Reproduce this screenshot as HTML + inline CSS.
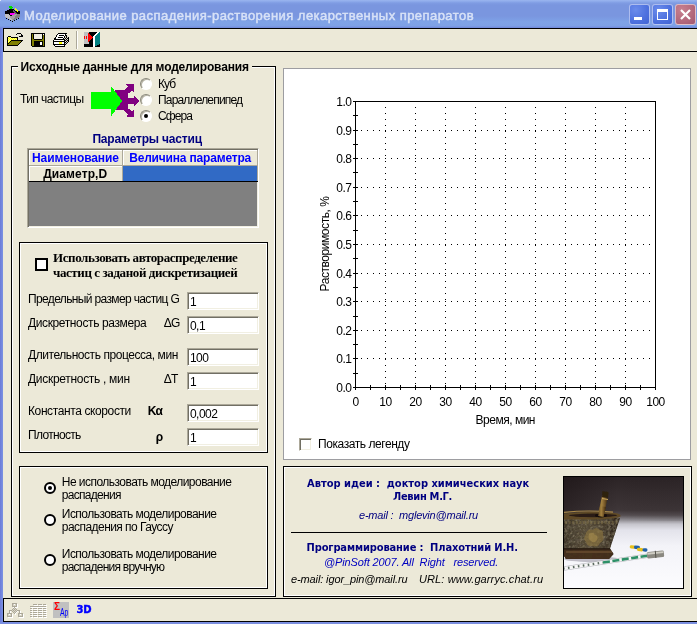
<!DOCTYPE html>
<html><head><meta charset="utf-8">
<title>Моделирование распадения-растворения лекарственных препаратов</title>
<style>
html,body{margin:0;padding:0;}
body{width:697px;height:624px;overflow:hidden;background:#ECE9D8;position:relative;font-family:"Liberation Sans",sans-serif;font-size:11px;color:#000;}
.a{position:absolute;}
.t{position:absolute;white-space:pre;line-height:13px;}
.b{font-weight:bold;font-family:"DejaVu Sans Condensed","Liberation Sans",sans-serif;}
.i{font-style:italic;}
.u{position:absolute;white-space:pre;font-size:12px;line-height:14px;}
.bb{font-weight:bold;}
.box{position:absolute;border:1px solid #000;box-sizing:border-box;box-shadow:inset 0 0 0 1px #fff;}
.inp{position:absolute;box-sizing:border-box;background:#fff;border:1px solid;border-color:#aca899 #fff #fff #aca899;box-shadow:inset 1px 1px 0 #716f64, inset -1px -1px 0 #f1efe2;width:72px;height:18px;left:187px;padding:2px 0 0 2px;line-height:14px;font-size:12px;letter-spacing:-0.55px;}
.sr{position:absolute;width:12px;height:12px;border-radius:50%;box-sizing:border-box;background:#fff;border:1px solid;border-color:#8a887b #fff #fff #8a887b;box-shadow:inset 1px 1px 0 #b5b2a3;transform:rotate(0deg);}
.br{position:absolute;width:12px;height:12px;border-radius:50%;box-sizing:border-box;background:#fff;border:2px solid #000;}
.cb{position:absolute;top:4px;width:21px;height:21px;box-sizing:border-box;border:1px solid rgba(255,255,255,.55);border-radius:3px;background:radial-gradient(circle at 30% 25%,#6b8ceb 0,#4f72df 55%,#4163d3 100%);}
#w{position:absolute;left:0;top:0;width:697px;height:624px;will-change:transform;}
</style></head><body><div id="w">
<!-- title bar -->
<div class="a" style="left:0;top:0;width:697px;height:28px;background:linear-gradient(#9ab5ef 0,#92aeec 1px,#7f9ce3 3px,#7a96df 5px,#7a96df 16px,#7c9ce3 19px,#7fa3e7 22px,#7ea1e6 26px,#7791df 27px,#6f88d8 28px);"></div>
<div class="t" style="left:24px;top:8px;font-weight:normal;-webkit-text-stroke:0.45px #d8e2f7;font-size:13px;line-height:16px;color:#d8e2f7;letter-spacing:0.45px;">Моделирование распадения-растворения лекарственных препаратов</div>
<div class="cb" style="left:629px;"><div class="a" style="left:4px;top:12px;width:8px;height:3px;background:#fff;"></div></div>
<div class="cb" style="left:652px;"><div class="a" style="left:4px;top:4px;width:11px;height:11px;box-sizing:border-box;border:1px solid #fff;border-top-width:3px;"></div></div>
<div class="cb" style="left:675px;background:radial-gradient(circle at 30% 25%,#c8808f 0,#b46a7e 55%,#a25872 100%);"><svg class="a" style="left:0;top:0" width="19" height="19"><path d="M5 5l9 9M14 5l-9 9" stroke="#fff" stroke-width="2.2" fill="none"/></svg></div>
<svg class="a" style="left:5px;top:6px;" width="16" height="16" viewBox="0 0 16 16" shape-rendering="crispEdges">
<path fill="#00e000" d="M4 0h3v1h-3zM4 1h4v1h-4zM5 2h2v1h-2z"/>
<path fill="#ffff00" d="M10 2h1v1h-1zM10 3h2v1h-2zM11 4h2v1h-2zM12 5h1v1h-1z"/>
<path fill="#000" d="M4 3h5v1h-5zM2 4h6v1h-6zM9 4h1v1h-1zM0 5h8v1h-8zM10 5h2v1h-2zM13 5h2v1h-2zM0 6h9v1h-9zM11 6h4v1h-4zM0 7h5v1h-5zM12 7h3v1h-3zM4 8h1v1h-1zM5 9h2v1h-2zM1 12h1v1h-1zM13 12h1v1h-1zM3 13h1v1h-1zM11 13h1v1h-1zM5 14h1v1h-1zM9 14h1v1h-1zM7 15h1v1h-1z"/>
<path fill="#606060" d="M8 4h1v1h-1zM8 5h2v1h-2zM9 6h2v1h-2zM10 7h2v1h-2z"/>
<path fill="#ff00ff" d="M5 7h5v1h-5zM5 8h4v1h-4z"/>
<path fill="#c0c0c0" d="M0 8h4v1h-4zM0 9h5v1h-5zM0 10h5v1h-5zM1 11h4v1h-4zM3 12h3v1h-3zM5 13h2v1h-2z"/>
<path fill="#a0a0a0" d="M9 8h3v1h-3zM7 9h4v1h-4zM5 10h5v1h-5zM5 11h5v1h-5zM6 12h3v1h-3zM7 13h1v1h-1zM7 14h1v1h-1z"/>
<path fill="#808080" d="M12 8h3v1h-3zM11 9h4v1h-4zM10 10h5v1h-5zM10 11h4v1h-4zM9 12h3v1h-3zM8 13h2v1h-2z"/>
</svg>
<div class="a" style="left:0;top:0;width:1px;height:1px;background:#e4e6f4;"></div>
<!-- window borders -->
<div class="a" style="left:0;top:28px;width:3px;height:596px;background:linear-gradient(90deg,#6b7ad8,#7b92e3);"></div>
<div class="a" style="left:0;top:622px;width:697px;height:2px;background:#7b8fe0;"></div>
<!-- toolbar -->
<div class="a" style="left:3px;top:28px;width:694px;height:1px;background:#000;"></div>
<div class="a" style="left:3px;top:51px;width:694px;height:1px;background:#000;"></div>
<div class="a" style="left:3px;top:28px;width:1px;height:24px;background:#000;"></div>
<svg class="a" style="left:7px;top:33px;" width="16" height="13" viewBox="0 0 16 13" shape-rendering="crispEdges">
<path fill="#000" d="M10 0h4v1h-4zM9 1h1v1h-1zM14 1h1v1h-1zM14 2h2v1h-2zM1 3h3v1h-3zM12 3h4v1h-4zM0 4h1v1h-1zM4 4h7v1h-7zM0 5h1v1h-1zM10 5h1v1h-1zM0 6h1v1h-1zM10 6h1v1h-1zM0 7h1v1h-1zM4 7h12v1h-12zM0 8h1v1h-1zM3 8h1v1h-1zM14 8h1v1h-1zM0 9h1v1h-1zM2 9h1v1h-1zM13 9h1v1h-1zM0 10h2v1h-2zM12 10h1v1h-1zM0 11h1v1h-1zM11 11h1v1h-1zM0 12h11v1h-11z"/>
<path fill="#ffff90" d="M1 4h1v1h-1zM3 4h1v1h-1zM2 5h1v1h-1zM4 5h1v1h-1zM6 5h1v1h-1zM8 5h1v1h-1zM1 6h1v1h-1zM3 6h1v1h-1zM5 6h1v1h-1zM7 6h1v1h-1zM9 6h1v1h-1zM2 7h1v1h-1zM1 8h1v1h-1z"/>
<path fill="#ffff00" d="M2 4h1v1h-1zM1 5h1v1h-1zM3 5h1v1h-1zM5 5h1v1h-1zM7 5h1v1h-1zM9 5h1v1h-1zM2 6h1v1h-1zM4 6h1v1h-1zM6 6h1v1h-1zM8 6h1v1h-1zM1 7h1v1h-1zM3 7h1v1h-1zM2 8h1v1h-1zM1 9h1v1h-1z"/>
<path fill="#808000" d="M4 8h10v1h-10zM3 9h10v1h-10zM2 10h10v1h-10zM1 11h10v1h-10z"/>
</svg>
<svg class="a" style="left:31px;top:33px;" width="14" height="14" viewBox="0 0 14 14" shape-rendering="crispEdges">
<path fill="#000" d="M0 0h14v1h-14zM0 1h1v1h-1zM2 1h1v1h-1zM11 1h1v1h-1zM13 1h1v1h-1zM0 2h1v1h-1zM2 2h1v1h-1zM11 2h1v1h-1zM13 2h1v1h-1zM0 3h1v1h-1zM2 3h1v1h-1zM11 3h1v1h-1zM13 3h1v1h-1zM0 4h1v1h-1zM2 4h1v1h-1zM11 4h1v1h-1zM13 4h1v1h-1zM0 5h1v1h-1zM2 5h1v1h-1zM11 5h1v1h-1zM13 5h1v1h-1zM0 6h1v1h-1zM3 6h8v1h-8zM13 6h1v1h-1zM0 7h1v1h-1zM13 7h1v1h-1zM0 8h1v1h-1zM3 8h9v1h-9zM13 8h1v1h-1zM0 9h1v1h-1zM3 9h6v1h-6zM11 9h1v1h-1zM13 9h1v1h-1zM0 10h1v1h-1zM3 10h6v1h-6zM11 10h1v1h-1zM13 10h1v1h-1zM0 11h1v1h-1zM3 11h6v1h-6zM11 11h1v1h-1zM13 11h1v1h-1zM0 12h1v1h-1zM3 12h9v1h-9zM13 12h1v1h-1zM1 13h13v1h-13z"/>
<path fill="#808000" d="M1 1h1v1h-1zM1 2h1v1h-1zM12 2h1v1h-1zM1 3h1v1h-1zM12 3h1v1h-1zM1 4h1v1h-1zM12 4h1v1h-1zM1 5h1v1h-1zM12 5h1v1h-1zM1 6h2v1h-2zM11 6h2v1h-2zM1 7h12v1h-12zM1 8h2v1h-2zM12 8h1v1h-1zM1 9h2v1h-2zM12 9h1v1h-1zM1 10h2v1h-2zM12 10h1v1h-1zM1 11h2v1h-2zM12 11h1v1h-1zM1 12h2v1h-2zM12 12h1v1h-1z"/>
<path fill="#f1efe2" d="M3 1h8v1h-8zM3 2h8v1h-8zM3 3h8v1h-8zM3 4h8v1h-8zM3 5h8v1h-8z"/>
<path fill="#fff" d="M12 1h1v1h-1zM9 9h2v1h-2zM9 10h2v1h-2zM9 11h2v1h-2z"/>
</svg>
<svg class="a" style="left:53px;top:33px;" width="16" height="14" viewBox="0 0 16 14" shape-rendering="crispEdges">
<path fill="#000" d="M5 0h9v1h-9zM4 1h1v1h-1zM12 1h1v1h-1zM3 2h1v1h-1zM6 2h5v1h-5zM12 2h2v1h-2zM3 3h1v1h-1zM11 3h1v1h-1zM13 3h1v1h-1zM2 4h1v1h-1zM5 4h5v1h-5zM11 4h1v1h-1zM13 4h1v1h-1zM15 4h1v1h-1zM1 5h2v1h-2zM10 5h1v1h-1zM12 5h1v1h-1zM14 5h2v1h-2zM1 6h11v1h-11zM13 6h1v1h-1zM15 6h1v1h-1zM0 7h1v1h-1zM11 7h2v1h-2zM14 7h2v1h-2zM0 8h12v1h-12zM13 8h1v1h-1zM15 8h1v1h-1zM0 9h1v1h-1zM11 9h2v1h-2zM14 9h1v1h-1zM0 10h1v1h-1zM11 10h1v1h-1zM13 10h1v1h-1zM0 11h13v1h-13zM1 12h1v1h-1zM11 12h1v1h-1zM2 13h10v1h-10z"/>
<path fill="#fff" d="M5 1h7v1h-7zM4 2h2v1h-2zM11 2h1v1h-1zM4 3h7v1h-7zM3 4h2v1h-2zM10 4h1v1h-1zM3 5h7v1h-7zM1 7h10v1h-10zM1 9h5v1h-5zM9 9h2v1h-2zM1 10h5v1h-5zM9 10h2v1h-2zM2 12h9v1h-9z"/>
<path fill="#d8d5c6" d="M12 3h1v1h-1zM14 3h1v1h-1zM12 4h1v1h-1zM14 4h1v1h-1zM11 5h1v1h-1zM13 5h1v1h-1zM12 6h1v1h-1zM14 6h1v1h-1zM13 7h1v1h-1zM12 8h1v1h-1zM14 8h1v1h-1zM13 9h1v1h-1zM12 10h1v1h-1z"/>
<path fill="#ffff00" d="M6 9h3v1h-3zM6 10h3v1h-3z"/>
</svg>
<div class="a" style="left:76px;top:31px;width:1px;height:18px;background:#aca899;"></div>
<div class="a" style="left:77px;top:31px;width:1px;height:18px;background:#fff;"></div>
<svg class="a" style="left:84px;top:32px;" width="16" height="15" viewBox="0 0 16 15" shape-rendering="crispEdges">
<rect x="0" y="0" width="16" height="15" fill="#000"/>
<rect x="0" y="0" width="5" height="12" fill="#c0c0c0"/>
<rect x="0" y="4" width="1" height="3" fill="#f00"/><rect x="2" y="4" width="1" height="3" fill="#f00"/>
<polygon points="4,1 9.5,5.5 4,10" fill="#f00"/>
<rect x="5" y="0" width="11" height="0" fill="#000"/>
<polygon points="10,4.5 14.5,0 16,0 16,12 11.5,14.5 10,14.5" fill="#008080"/>
<path d="M14.5 0.2L10 4.7V14.5" stroke="#fff" stroke-width="1.2" fill="none"/>
</svg>
<!-- status bar -->
<div class="a" style="left:3px;top:598px;width:694px;height:1px;background:#000;"></div>
<div class="a" style="left:3px;top:621px;width:694px;height:1px;background:#000;"></div>
<div class="a" style="left:3px;top:598px;width:1px;height:24px;background:#000;"></div>
<svg class="a" style="left:7px;top:603px;" width="17" height="15" viewBox="0 0 17 15" shape-rendering="crispEdges">
<path fill="#aca899" d="M5 0h5v1h-5zM5 1h1v1h-1zM9 1h1v1h-1zM5 2h1v1h-1zM9 2h1v1h-1zM5 3h5v1h-5zM7 4h1v1h-1zM6 5h1v1h-1zM8 5h1v1h-1zM5 6h1v1h-1zM7 6h1v1h-1zM9 6h1v1h-1zM2 7h3v1h-3zM6 7h1v1h-1zM8 7h1v1h-1zM10 7h3v1h-3zM2 8h1v1h-1zM5 8h1v1h-1zM7 8h1v1h-1zM9 8h1v1h-1zM12 8h1v1h-1zM2 9h1v1h-1zM6 9h1v1h-1zM8 9h1v1h-1zM12 9h1v1h-1zM0 10h5v1h-5zM7 10h1v1h-1zM11 10h5v1h-5zM0 11h1v1h-1zM4 11h1v1h-1zM11 11h1v1h-1zM15 11h1v1h-1zM0 12h1v1h-1zM4 12h1v1h-1zM11 12h1v1h-1zM15 12h1v1h-1zM0 13h5v1h-5zM11 13h5v1h-5z"/>
<path fill="#d8d5c6" d="M6 1h1v1h-1zM8 1h1v1h-1zM6 2h3v1h-3zM7 5h1v1h-1zM6 6h1v1h-1zM8 6h1v1h-1zM5 7h1v1h-1zM7 7h1v1h-1zM9 7h1v1h-1zM6 8h1v1h-1zM8 8h1v1h-1zM7 9h1v1h-1zM1 11h1v1h-1zM3 11h1v1h-1zM12 11h1v1h-1zM14 11h1v1h-1zM1 12h3v1h-3zM12 12h3v1h-3z"/>
<path fill="#fff" d="M7 1h1v1h-1zM10 1h1v1h-1zM10 2h1v1h-1zM10 3h1v1h-1zM6 4h1v1h-1zM8 4h3v1h-3zM3 8h1v1h-1zM10 8h1v1h-1zM13 8h1v1h-1zM3 9h1v1h-1zM9 9h1v1h-1zM13 9h1v1h-1zM8 10h1v1h-1zM2 11h1v1h-1zM5 11h1v1h-1zM8 11h1v1h-1zM13 11h1v1h-1zM16 11h1v1h-1zM5 12h1v1h-1zM16 12h1v1h-1zM5 13h1v1h-1zM16 13h1v1h-1zM1 14h5v1h-5zM12 14h5v1h-5z"/>
</svg>
<svg class="a" style="left:30px;top:604px;" width="17" height="14" viewBox="0 0 17 14" shape-rendering="crispEdges">
<path fill="#aca899" d="M3 0h4v1h-4zM8 0h4v1h-4zM13 0h3v1h-3zM0 2h16v1h-16zM0 4h2v1h-2zM3 4h4v1h-4zM8 4h4v1h-4zM13 4h3v1h-3zM0 6h2v1h-2zM3 6h4v1h-4zM8 6h4v1h-4zM13 6h3v1h-3zM0 8h2v1h-2zM3 8h4v1h-4zM8 8h4v1h-4zM13 8h3v1h-3zM0 10h2v1h-2zM3 10h4v1h-4zM8 10h4v1h-4zM13 10h3v1h-3zM0 12h2v1h-2zM3 12h4v1h-4zM8 12h4v1h-4zM13 12h3v1h-3z"/>
<path fill="#fff" d="M4 1h4v1h-4zM9 1h4v1h-4zM14 1h3v1h-3zM1 3h16v1h-16zM1 5h2v1h-2zM4 5h4v1h-4zM9 5h4v1h-4zM14 5h3v1h-3zM1 7h2v1h-2zM4 7h4v1h-4zM9 7h4v1h-4zM14 7h3v1h-3zM1 9h2v1h-2zM4 9h4v1h-4zM9 9h4v1h-4zM14 9h3v1h-3zM1 11h2v1h-2zM4 11h4v1h-4zM9 11h4v1h-4zM14 11h3v1h-3zM1 13h2v1h-2zM4 13h4v1h-4zM9 13h4v1h-4zM14 13h3v1h-3z"/>
</svg>
<div class="a" style="left:53px;top:602px;width:16px;height:16px;background:#c0c0c0;"></div>
<div class="t" style="left:54px;top:601px;font-size:10px;line-height:12px;font-weight:bold;color:#f00;">Σ</div>
<div class="t" style="left:60px;top:606px;font-size:10.5px;line-height:12px;color:#00f;transform:scaleX(0.66);transform-origin:0 0;">Ap</div>
<div class="t" style="left:76.5px;top:603px;font-size:10px;line-height:14px;font-weight:bold;color:#00f;font-family:'DejaVu Sans','Liberation Sans',sans-serif;-webkit-text-stroke:0.4px #00f;letter-spacing:-0.2px;">3D</div>

<!-- left group box -->
<div class="box" style="left:11px;top:66px;width:265px;height:531px;"></div>
<svg class="a" style="left:88px;top:80px;" width="56" height="42" viewBox="88 80 56 42" shape-rendering="crispEdges">
<polygon fill="#800080" points="115,90 125,90 128,86.5 126,85 126,84 134,84 134,92 132,91 128.3,93.5 128.3,97.6 134,97.6 134,95.5 139.3,101 134,107 134,103.5 128.3,103.5 128.3,108.5 132,111 134,110 134,117 127,117 127,116 128,114.5 124,110 115,110"/>
<polygon fill="#00ff00" points="91,92 111,92 111,86 122.3,101 111,116.3 111,109 91,109"/>
</svg>

<div class="sr" style="left:140px;top:78px;"></div>
<div class="sr" style="left:140px;top:94px;"></div>
<div class="sr" style="left:140px;top:110px;"></div>
<div class="a" style="left:144px;top:114px;width:4px;height:4px;border-radius:50%;background:#000;"></div>


<!-- table -->
<div class="a" style="left:27px;top:148px;width:232px;height:80px;background:#808080;border:1px solid;border-color:#aca899 #fff #fff #aca899;box-shadow:inset 1px 1px 0 #716f64, inset -1px -1px 0 #f1efe2;box-sizing:border-box;"></div>
<div class="a" style="left:29px;top:150px;width:229px;height:31px;background:#ECE9D8;"></div>
<div class="a" style="left:29px;top:150px;width:93px;height:1px;background:#fff;"></div>
<div class="a" style="left:29px;top:150px;width:1px;height:15px;background:#fff;"></div>
<div class="a" style="left:123px;top:150px;width:134px;height:1px;background:#fff;"></div>
<div class="a" style="left:123px;top:150px;width:1px;height:15px;background:#fff;"></div>
<div class="a" style="left:29px;top:166px;width:93px;height:1px;background:#fff;"></div>
<div class="a" style="left:29px;top:166px;width:1px;height:15px;background:#fff;"></div>
<div class="a" style="left:29px;top:165px;width:229px;height:1px;background:#aca899;"></div>
<div class="a" style="left:122px;top:150px;width:1px;height:31px;background:#aca899;"></div>
<div class="a" style="left:257px;top:150px;width:1px;height:31px;background:#aca899;"></div>
<div class="a" style="left:123px;top:166px;width:134px;height:15px;background:#316AC5;"></div>
<div class="a" style="left:29px;top:181px;width:229px;height:1px;background:#000;"></div>

<!-- panel 2 -->
<div class="box" style="left:19px;top:242px;width:249px;height:211px;"></div>
<div class="a" style="left:35px;top:258px;width:13px;height:13px;box-sizing:border-box;border:2px solid #000;background:#fff;"></div>
<div class="t" style="left:53px;top:250px;font-family:'Liberation Serif',serif;font-weight:bold;font-size:13px;line-height:15px;letter-spacing:-0.41px;">Использовать автораспределение
частиц с заданой дискретизацией</div>


<div class="inp" style="top:292px;">1</div>
<div class="inp" style="top:316px;">0,1</div>
<div class="inp" style="top:348px;">100</div>
<div class="inp" style="top:372px;">1</div>
<div class="inp" style="top:404px;">0,002</div>
<div class="inp" style="top:428px;">1</div>

<!-- panel 3 -->
<div class="box" style="left:19px;top:466px;width:249px;height:123px;"></div>
<div class="br" style="left:44px;top:482px;"></div>
<div class="a" style="left:48px;top:486px;width:4px;height:4px;border-radius:50%;background:#000;"></div>
<div class="br" style="left:44px;top:514px;"></div>
<div class="br" style="left:44px;top:554px;"></div>

<svg class="a" style="left:283px;top:68px;" width="408" height="392" viewBox="0 0 408 392" shape-rendering="crispEdges" font-family="Liberation Sans, sans-serif" font-size="12" letter-spacing="-0.5">
<rect x="0.5" y="0.5" width="407" height="391" fill="#fff" stroke="#9d9da1"/>
<line x1="78" x2="372" y1="62.5" y2="62.5" stroke="#000" stroke-dasharray="1 5"/>
<line x1="78" x2="372" y1="90.5" y2="90.5" stroke="#000" stroke-dasharray="1 5"/>
<line x1="78" x2="372" y1="119.5" y2="119.5" stroke="#000" stroke-dasharray="1 5"/>
<line x1="78" x2="372" y1="147.5" y2="147.5" stroke="#000" stroke-dasharray="1 5"/>
<line x1="78" x2="372" y1="176.5" y2="176.5" stroke="#000" stroke-dasharray="1 5"/>
<line x1="78" x2="372" y1="205.5" y2="205.5" stroke="#000" stroke-dasharray="1 5"/>
<line x1="78" x2="372" y1="233.5" y2="233.5" stroke="#000" stroke-dasharray="1 5"/>
<line x1="78" x2="372" y1="262.5" y2="262.5" stroke="#000" stroke-dasharray="1 5"/>
<line x1="78" x2="372" y1="290.5" y2="290.5" stroke="#000" stroke-dasharray="1 5"/>
<line x1="102.5" x2="102.5" y1="39" y2="319" stroke="#000" stroke-dasharray="1 5"/>
<line x1="132.5" x2="132.5" y1="39" y2="319" stroke="#000" stroke-dasharray="1 5"/>
<line x1="162.5" x2="162.5" y1="39" y2="319" stroke="#000" stroke-dasharray="1 5"/>
<line x1="192.5" x2="192.5" y1="39" y2="319" stroke="#000" stroke-dasharray="1 5"/>
<line x1="222.5" x2="222.5" y1="39" y2="319" stroke="#000" stroke-dasharray="1 5"/>
<line x1="252.5" x2="252.5" y1="39" y2="319" stroke="#000" stroke-dasharray="1 5"/>
<line x1="282.5" x2="282.5" y1="39" y2="319" stroke="#000" stroke-dasharray="1 5"/>
<line x1="312.5" x2="312.5" y1="39" y2="319" stroke="#000" stroke-dasharray="1 5"/>
<line x1="342.5" x2="342.5" y1="39" y2="319" stroke="#000" stroke-dasharray="1 5"/>
<rect x="72.5" y="33.5" width="300" height="286" fill="none" stroke="#000"/>
<path d="M70 33.5h5M70 47.5h5M70 62.5h5M70 76.5h5M70 90.5h5M70 104.5h5M70 119.5h5M70 133.5h5M70 147.5h5M70 162.5h5M70 176.5h5M70 190.5h5M70 205.5h5M70 219.5h5M70 233.5h5M70 248.5h5M70 262.5h5M70 276.5h5M70 290.5h5M70 305.5h5M70 319.5h5M72.5 317v5M87.5 317v5M102.5 317v5M117.5 317v5M132.5 317v5M147.5 317v5M162.5 317v5M177.5 317v5M192.5 317v5M207.5 317v5M222.5 317v5M237.5 317v5M252.5 317v5M267.5 317v5M282.5 317v5M297.5 317v5M312.5 317v5M327.5 317v5M342.5 317v5M357.5 317v5M372.5 317v5" stroke="#000" fill="none"/>
<text x="68.5" y="38" text-anchor="end">1.0</text>
<text x="68.5" y="67" text-anchor="end">0.9</text>
<text x="68.5" y="95" text-anchor="end">0.8</text>
<text x="68.5" y="124" text-anchor="end">0.7</text>
<text x="68.5" y="152" text-anchor="end">0.6</text>
<text x="68.5" y="181" text-anchor="end">0.5</text>
<text x="68.5" y="210" text-anchor="end">0.4</text>
<text x="68.5" y="238" text-anchor="end">0.3</text>
<text x="68.5" y="267" text-anchor="end">0.2</text>
<text x="68.5" y="295" text-anchor="end">0.1</text>
<text x="68.5" y="324" text-anchor="end">0.0</text>
<text x="72.5" y="338" text-anchor="middle">0</text>
<text x="102.5" y="338" text-anchor="middle">10</text>
<text x="132.5" y="338" text-anchor="middle">20</text>
<text x="162.5" y="338" text-anchor="middle">30</text>
<text x="192.5" y="338" text-anchor="middle">40</text>
<text x="222.5" y="338" text-anchor="middle">50</text>
<text x="252.5" y="338" text-anchor="middle">60</text>
<text x="282.5" y="338" text-anchor="middle">70</text>
<text x="312.5" y="338" text-anchor="middle">80</text>
<text x="342.5" y="338" text-anchor="middle">90</text>
<text x="372.5" y="338" text-anchor="middle">100</text>
<text x="192.5" y="356" textLength="59.5" lengthAdjust="spacing">Время, мин</text>
<text transform="translate(45.5 223.5) rotate(-90)" textLength="95" lengthAdjust="spacing">Растворимость, %</text>
</svg>
<div class="u" style="left:20.0px;top:92px;letter-spacing:-0.59px;">Тип частицы</div>
<div class="u" style="left:158.0px;top:77px;letter-spacing:-0.90px;">Куб</div>
<div class="u" style="left:158.0px;top:93px;letter-spacing:-0.82px;">Параллелепипед</div>
<div class="u" style="left:158.0px;top:109px;letter-spacing:-0.90px;">Сфера</div>
<div class="u" style="left:28.0px;top:292px;letter-spacing:-0.64px;">Предельный размер частиц G</div>
<div class="u" style="left:28.0px;top:316px;letter-spacing:-0.38px;">Дискретность размера</div>
<div class="u" style="left:163.8px;top:316px;letter-spacing:-0.90px;">ΔG</div>
<div class="u" style="left:28.0px;top:348px;letter-spacing:-0.44px;">Длительность процесса, мин</div>
<div class="u" style="left:28.0px;top:372px;letter-spacing:-0.30px;">Дискретность , мин</div>
<div class="u" style="left:163.8px;top:372px;letter-spacing:-0.90px;">ΔT</div>
<div class="u" style="left:28.0px;top:404px;letter-spacing:-0.39px;">Константа скорости</div>
<div class="u" style="left:28.0px;top:428px;letter-spacing:-0.68px;">Плотность</div>
<div class="u" style="left:61.8px;top:475px;letter-spacing:-0.54px;">Не использовать моделирование</div>
<div class="u" style="left:61.8px;top:488px;letter-spacing:-0.70px;">распадения</div>
<div class="u" style="left:61.8px;top:507px;letter-spacing:-0.53px;">Использовать моделирование</div>
<div class="u" style="left:61.8px;top:520px;letter-spacing:-0.55px;">распадения по Гауссу</div>
<div class="u" style="left:61.8px;top:547px;letter-spacing:-0.53px;">Использовать моделирование</div>
<div class="u" style="left:61.8px;top:560px;letter-spacing:-0.76px;">распадения вручную</div>
<div class="u" style="left:318.1px;top:437px;letter-spacing:-0.44px;">Показать легенду</div>
<div class="a" style="left:18px;top:62px;width:234px;height:10px;background:#ECE9D8;"></div>
<div class="u bb" style="left:20.6px;top:60px;letter-spacing:-0.17px;">Исходные данные для моделирования</div>
<div class="u bb" style="left:92.4px;top:132px;letter-spacing:-0.18px;color:#000080;">Параметры частиц</div>
<div class="u bb" style="left:32.0px;top:151px;letter-spacing:-0.10px;color:#0000ff;">Наименование</div>
<div class="u bb" style="left:129.2px;top:151px;letter-spacing:-0.18px;color:#0000ff;">Величина параметра</div>
<div class="u bb" style="left:43.2px;top:167px;letter-spacing:0.10px;">Диаметр,D</div>
<div class="u bb" style="left:147.8px;top:404px;letter-spacing:-0.90px;">Kα</div>
<div class="u bb" style="left:155.8px;top:430px;">ρ</div>
<!-- legend checkbox -->
<div class="a" style="left:299px;top:438px;width:13px;height:13px;box-sizing:border-box;background:#fff;border:1px solid;border-color:#aca899 #fff #fff #aca899;box-shadow:inset 1px 1px 0 #716f64, inset -1px -1px 0 #f1efe2;"></div>

<!-- info panel -->
<div class="box" style="left:283px;top:466px;width:409px;height:131px;"></div>
<div class="t b" style="left:307px;top:477px;color:#000080;">Автор идеи :  доктор химических наук</div>
<div class="t b" style="left:393px;top:490px;color:#000080;letter-spacing:-0.3px;">Левин М.Г.</div>
<div class="t i" style="left:359px;top:509px;color:#000080;letter-spacing:-0.21px;">e-mail :  mglevin@mail.ru</div>
<div class="a" style="left:291px;top:532px;width:256px;height:1px;background:#000;"></div>
<div class="t b" style="left:306.5px;top:541px;color:#000080;letter-spacing:-0.11px;">Программирование :  Плахотний И.Н.</div>
<div class="t i" style="left:324px;top:556px;color:#0000c0;letter-spacing:-0.13px;">@PinSoft 2007. All  Right   reserved.</div>
<div class="t i" style="left:291px;top:573px;letter-spacing:-0.12px;">e-mail: igor_pin@mail.ru</div>
<div class="t i" style="left:419px;top:573px;letter-spacing:0.11px;">URL: www.garryc.chat.ru</div>
<svg class="a" style="left:563px;top:476px;" width="121" height="113" viewBox="0 0 121 113">
<defs>
<linearGradient id="pbg" x1="0" y1="0" x2="0" y2="1">
<stop offset="0" stop-color="#2b2325"/><stop offset="0.15" stop-color="#352d2f"/><stop offset="0.3" stop-color="#3e3638"/><stop offset="0.345" stop-color="#564f52"/><stop offset="0.385" stop-color="#8d8a8f"/><stop offset="0.425" stop-color="#c6c5cc"/><stop offset="0.48" stop-color="#e3e3eb"/><stop offset="0.62" stop-color="#f3f3f8"/><stop offset="1" stop-color="#fcfcfe"/>
</linearGradient>
<linearGradient id="pbg2" x1="0" y1="0" x2="1" y2="0">
<stop offset="0" stop-color="#120a0c" stop-opacity=".4"/><stop offset="0.45" stop-color="#120a0c" stop-opacity="0"/><stop offset="1" stop-color="#2a2428" stop-opacity=".12"/>
</linearGradient>
<linearGradient id="mort" x1="0" y1="0" x2="1" y2="0">
<stop offset="0" stop-color="#3a3226"/><stop offset="0.4" stop-color="#544a35"/><stop offset="0.75" stop-color="#42382a"/><stop offset="1" stop-color="#221a13"/>
</linearGradient>
<linearGradient id="pest" x1="0" y1="0" x2="1" y2="0">
<stop offset="0" stop-color="#5a431e"/><stop offset="0.4" stop-color="#a58240"/><stop offset="0.7" stop-color="#735526"/><stop offset="1" stop-color="#34240e"/>
</linearGradient>
<filter id="pblur" x="-5%" y="-5%" width="110%" height="110%"><feGaussianBlur stdDeviation="0.55"/></filter>
<filter id="ptex" x="0" y="0" width="100%" height="100%"><feTurbulence type="fractalNoise" baseFrequency="0.3" numOctaves="2" seed="3" result="n"/><feColorMatrix in="n" type="matrix" values="0 0 0 0 0.1  0 0 0 0 0.08  0 0 0 0 0.05  2.4 1.8 0 0 -1.75"/><feComposite in2="SourceGraphic" operator="in"/></filter>
<filter id="ptex2" x="0" y="0" width="100%" height="100%"><feTurbulence type="fractalNoise" baseFrequency="0.4" numOctaves="2" seed="11" result="n"/><feColorMatrix in="n" type="matrix" values="0 0 0 0 0.62  0 0 0 0 0.55  0 0 0 0 0.36  0 2.6 1.4 0 -1.9"/><feComposite in2="SourceGraphic" operator="in"/></filter>
<clipPath id="pclip"><rect x="1" y="1" width="119" height="111"/></clipPath>
</defs>
<rect x="0" y="0" width="121" height="113" fill="#000"/>
<g clip-path="url(#pclip)">
<rect x="1" y="1" width="119" height="111" fill="url(#pbg)"/>
<rect x="1" y="1" width="119" height="44" fill="url(#pbg2)"/>
<g filter="url(#pblur)">
<!-- floor shadow -->
<ellipse cx="28" cy="83" rx="27" ry="3" fill="#a9a7b2" opacity=".7"/>
<!-- pestle upper -->
<polygon points="34.5,40 39.3,19 45,20 40.5,41" fill="url(#pest)"/>
<polygon points="39.3,15 45.5,16 45,22 39,21" fill="#2e2010"/>
<path d="M39 22.5L45 23.5" stroke="#c8a860" stroke-width="1"/>
<!-- mortar body -->
<path d="M1 42H57L47 72.5 50.5 78 46 83H3L1 80Z" fill="url(#mort)"/>
<path d="M1 42H57L47 72.5 50.5 78 46 83H3L1 80Z" fill="#1a140c" filter="url(#ptex)"/>
<path d="M1 42H57L47 72.5H1Z" fill="#1a140c" filter="url(#ptex2)" opacity=".3"/>
<!-- ornament band -->
<path d="M2 46.5H54" stroke="#857548" stroke-width="3" stroke-dasharray="2 1.6" opacity=".45"/>
<!-- base -->
<path d="M1 72.5H47L50.5 78 46 83H3L1 80Z" fill="#432e1c" opacity=".92"/>
<path d="M3 76H49" stroke="#7a5a38" stroke-width="1.4" opacity=".7"/>
<path d="M1 72.8H47" stroke="#231810" stroke-width="1.2"/>
<!-- relief -->
<path d="M22 60q2-8 8-6q3-4 7 0q4 0 3 5q2 5-3 8q-2 5-7 3q-6 1-7-4q-3-3-1-6z" fill="#86703e" opacity=".7"/>
<path d="M26 58q4-3 6 1q4 1 2 5q-3 4-6 1q-4-2-2-7z" fill="#b09450" opacity=".5"/>
<!-- rim -->
<path d="M1 37.5Q26 34.5 52 37Q58.5 38 57.5 40.5Q55 43 26 43.5L1 43.5Z" fill="#5e4a28"/>
<path d="M1 36.3Q26 33.8 50 36.2" stroke="#a88848" stroke-width="1.2" fill="none"/>
<ellipse cx="30" cy="39.4" rx="24" ry="1.8" fill="#2a1e12"/>
<ellipse cx="38" cy="39.6" rx="6" ry="1.8" fill="#120c08"/>
<polygon points="35,40 37.2,30 43,31 40.6,41" fill="url(#pest)"/>
<!-- rod -->
<line x1="0" y1="92.6" x2="85" y2="79.6" stroke="#b4b4ba" stroke-width="4.4"/>
<line x1="0" y1="92.6" x2="85" y2="79.6" stroke="#f7f7f7" stroke-width="3.2"/>
<line x1="0" y1="92.6" x2="40" y2="86.5" stroke="#5c6a60" stroke-width="2.2" stroke-dasharray="1.6 3.4"/>
<line x1="40" y1="86.5" x2="85" y2="79.6" stroke="#2f9068" stroke-width="2.6" stroke-dasharray="7 2.5"/>
<!-- cap -->
<rect x="84" y="75.3" width="17" height="6.6" rx="1.5" fill="#8a8880" transform="rotate(-6 92 78.5)"/>
<rect x="84.5" y="76" width="16" height="2" fill="#cfcdc4" transform="rotate(-6 92 78.5)"/>
<line x1="92.3" y1="74.8" x2="92.9" y2="82" stroke="#55534c" stroke-width="1"/>
<!-- capsules -->
<g transform="rotate(5 72 71)"><rect x="66.7" y="69.5" width="6" height="3.4" rx="1.6" fill="#e6c01c"/><rect x="71" y="69.5" width="6" height="3.4" rx="1.6" fill="#2460a6"/></g>
<g transform="rotate(5 79 73.5)"><rect x="73.9" y="72" width="6.5" height="3.4" rx="1.6" fill="#e6c01c"/><rect x="79.5" y="72" width="5" height="3.4" rx="1.6" fill="#2460a6"/></g>
</g>
</g>
<rect x="0.5" y="0.5" width="120" height="112" fill="none" stroke="#000"/>
</svg>

</div></body></html>
